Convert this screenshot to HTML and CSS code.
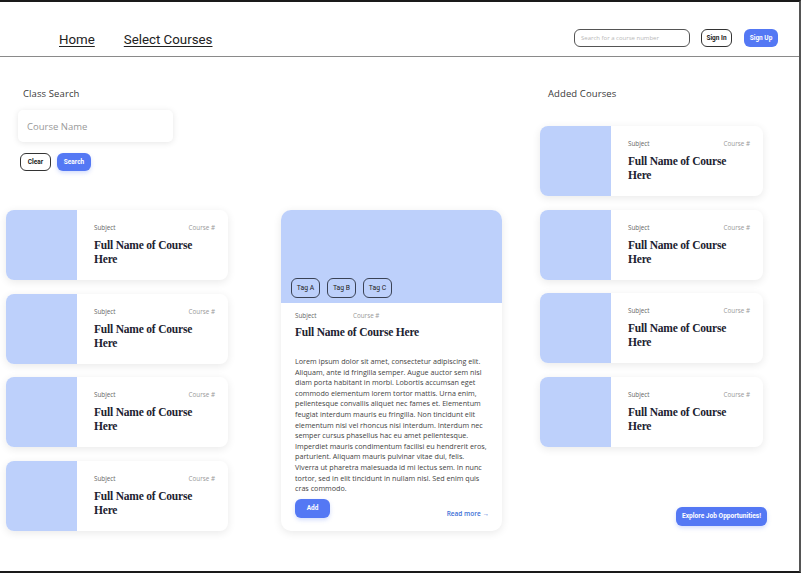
FILE: index.html
```html
<!DOCTYPE html>
<html lang="en">
<head>
<meta charset="utf-8">
<title>Select Courses</title>
<link rel="stylesheet" href="styles.css">
</head>
<body>
<div class="page">
  <header class="topbar">
    <nav class="nav">
      <a class="nav-link" href="#">Home</a>
      <a class="nav-link" href="#">Select Courses</a>
    </nav>
    <div class="actions">
      <div class="top-search">Search for a course number</div>
      <button class="btn btn-outline btn-signin">Sign In</button>
      <button class="btn btn-primary btn-signup">Sign Up</button>
    </div>
  </header>

  <main class="main">
    <section class="col col-left">
      <h2 class="section-title">Class Search</h2>
      <div class="search-box">Course Name</div>
      <div class="search-actions">
        <button class="btn btn-outline btn-clear">Clear</button>
        <button class="btn btn-primary btn-search">Search</button>
      </div>
      <div class="card-list card-list-left">
        <div class="course-card">
          <div class="thumb"></div>
          <div class="info">
            <div class="meta"><span>Subject</span><span class="num">Course #</span></div>
            <div class="title">Full Name of Course Here</div>
          </div>
        </div>
        <div class="course-card">
          <div class="thumb"></div>
          <div class="info">
            <div class="meta"><span>Subject</span><span class="num">Course #</span></div>
            <div class="title">Full Name of Course Here</div>
          </div>
        </div>
        <div class="course-card">
          <div class="thumb"></div>
          <div class="info">
            <div class="meta"><span>Subject</span><span class="num">Course #</span></div>
            <div class="title">Full Name of Course Here</div>
          </div>
        </div>
        <div class="course-card">
          <div class="thumb"></div>
          <div class="info">
            <div class="meta"><span>Subject</span><span class="num">Course #</span></div>
            <div class="title">Full Name of Course Here</div>
          </div>
        </div>
      </div>
    </section>

    <section class="col col-mid">
      <article class="detail-card">
        <div class="detail-thumb">
          <span class="tag">Tag A</span>
          <span class="tag">Tag B</span>
          <span class="tag">Tag C</span>
        </div>
        <div class="detail-body">
          <div class="detail-meta"><span class="subject">Subject</span><span class="num">Course #</span></div>
          <h3 class="detail-title">Full Name of Course Here</h3>
          <p class="detail-text">Lorem ipsum dolor sit amet, consectetur adipiscing elit. Aliquam, ante id fringilla semper. Augue auctor sem nisl diam porta habitant in morbi. Lobortis accumsan eget commodo elementum lorem tortor mattis. Urna enim, pellentesque convallis aliquet nec fames et. Elementum feugiat interdum mauris eu fringilla. Non tincidunt elit elementum nisi vel rhoncus nisi interdum. Interdum nec semper cursus phasellus hac eu amet pellentesque. Imperdiet mauris condimentum facilisi eu hendrerit eros, parturient. Aliquam mauris pulvinar vitae dui, felis. Viverra ut pharetra malesuada id mi lectus sem. In nunc tortor, sed in elit tincidunt in nullam nisl. Sed enim quis cras commodo.</p>
          <div class="detail-footer">
            <button class="btn btn-primary btn-add">Add</button>
            <a class="read-more" href="#">Read more →</a>
          </div>
        </div>
      </article>
    </section>

    <section class="col col-right">
      <h2 class="section-title section-title-right">Added Courses</h2>
      <div class="card-list card-list-right">
        <div class="course-card">
          <div class="thumb"></div>
          <div class="info">
            <div class="meta"><span>Subject</span><span class="num">Course #</span></div>
            <div class="title">Full Name of Course Here</div>
          </div>
        </div>
        <div class="course-card">
          <div class="thumb"></div>
          <div class="info">
            <div class="meta"><span>Subject</span><span class="num">Course #</span></div>
            <div class="title">Full Name of Course Here</div>
          </div>
        </div>
        <div class="course-card">
          <div class="thumb"></div>
          <div class="info">
            <div class="meta"><span>Subject</span><span class="num">Course #</span></div>
            <div class="title">Full Name of Course Here</div>
          </div>
        </div>
        <div class="course-card">
          <div class="thumb"></div>
          <div class="info">
            <div class="meta"><span>Subject</span><span class="num">Course #</span></div>
            <div class="title">Full Name of Course Here</div>
          </div>
        </div>
      </div>
      <button class="btn btn-primary btn-explore">Explore Job Opportunities!</button>
    </section>
  </main>
</div>
</body>
</html>
```

FILE: styles.css
```css
* {
  box-sizing: border-box;
  margin: 0;
  padding: 0;
}

body {
  margin: 0;
  background: #fff;
  font-family: "Open Sans", "Noto Sans", sans-serif;
  color: #222;
}

.page {
  width: 801px;
  height: 573px;
  border-top: 2px solid #1a1a1a;
  border-right: 2px solid #555;
  border-bottom: 2px solid #1a1a1a;
  overflow: hidden;
  background: #fff;
}

/* ---------- top bar ---------- */
.topbar {
  height: 55px;
  border-bottom: 1px solid #8a8a8a;
  display: flex;
  align-items: center;
  justify-content: space-between;
  padding: 18px 21px 0 59px;
}

.nav {
  display: flex;
  gap: 29px;
  padding-top: 3px;
}

.nav-link {
  font-family: Roboto, "Liberation Sans", sans-serif;
  font-size: 13.3px;
  color: #222;
  text-decoration: underline;
  text-decoration-thickness: 1px;
  text-underline-offset: 2px;
}

.actions {
  display: flex;
  align-items: center;
  gap: 11px;
}

.top-search {
  width: 116px;
  height: 18px;
  border: 1px solid #555;
  border-radius: 6px;
  display: flex;
  align-items: center;
  padding-left: 6px;
  font-size: 6px;
  color: #b8b8b8;
}

.btn {
  font-family: Roboto, "Liberation Sans", sans-serif;
  font-weight: 700;
  font-size: 6.5px;
  height: 18px;
  border-radius: 6px;
  display: inline-flex;
  align-items: center;
  justify-content: center;
  cursor: pointer;
}

.btn-outline {
  background: #fff;
  border: 1px solid #333;
  color: #222;
}

.btn-primary {
  background: #5478f4;
  border: none;
  color: #fff;
}

.btn-signin { width: 31px; }
.btn-signup { width: 34px; margin-left: 1px; }

/* ---------- main ---------- */
.main {
  display: flex;
  padding-left: 6px;
}

.col-left {
  width: 222px;
  padding-top: 31px;
}

.col-mid {
  width: 221px;
  margin-left: 53px;
  padding-top: 153px;
}

.col-right {
  width: 223px;
  margin-left: 38px;
  padding-top: 31px;
  display: flex;
  flex-direction: column;
}

.section-title {
  font-size: 9.5px;
  font-weight: 500;
  line-height: 12px;
  color: #3a3a3a;
  padding-left: 17px;
  letter-spacing: 0.1px;
}

.section-title-right {
  padding-left: 8px;
}

.search-box {
  margin: 10px 0 0 12px;
  width: 155px;
  height: 32px;
  border-radius: 5px;
  background: #fff;
  box-shadow: 0 1px 6px rgba(0, 0, 0, 0.1);
  display: flex;
  align-items: center;
  padding-left: 9px;
  font-size: 9.5px;
  color: #999;
}

.search-actions {
  margin: 11px 0 0 14px;
  display: flex;
  gap: 6px;
}

.btn-clear { width: 31px; }
.btn-search {
  width: 34px;
  box-shadow: 0 2px 4px rgba(84, 120, 244, 0.25);
}

.card-list {
  display: flex;
  flex-direction: column;
  gap: 13.5px;
}

.card-list-left { margin-top: 39px; }
.card-list-right { margin-top: 26px; }

.course-card {
  display: flex;
  height: 70px;
  border-radius: 8px;
  background: #fff;
  box-shadow: 0 2px 8px rgba(0, 0, 0, 0.09);
  overflow: hidden;
}

.thumb {
  width: 71px;
  flex: none;
  background: #bdd0fb;
}

.info {
  flex: 1;
  padding: 14px 13px 0 17px;
}

.meta {
  display: flex;
  justify-content: space-between;
  font-size: 6.3px;
  line-height: 8px;
  color: #666;
}

.num { color: #999; }

.title {
  margin-top: 6px;
  font-family: "Liberation Serif", serif;
  font-weight: 700;
  font-size: 11.5px;
  line-height: 14px;
  letter-spacing: -0.2px;
  color: #1c2230;
}

/* ---------- detail card ---------- */
.detail-card {
  height: 321px;
  border-radius: 10px;
  background: #fff;
  box-shadow: 0 2px 8px rgba(0, 0, 0, 0.09);
  overflow: hidden;
  display: flex;
  flex-direction: column;
}

.detail-thumb {
  height: 93px;
  flex: none;
  background: #bdd0fb;
  display: flex;
  align-items: flex-end;
  gap: 7px;
  padding: 0 0 5px 10px;
}

.tag {
  width: 29px;
  height: 20px;
  border: 1px solid #3a4255;
  border-radius: 6px;
  display: flex;
  align-items: center;
  justify-content: center;
  font-family: Roboto, "Liberation Sans", sans-serif;
  font-size: 6.8px;
  color: #222;
}

.detail-body {
  padding: 9px 13px 0 14px;
}

.detail-meta {
  display: flex;
  font-size: 6.3px;
  line-height: 8px;
  color: #666;
}

.detail-meta .subject { width: 58px; }

.detail-title {
  margin-top: 5px;
  font-family: "Liberation Serif", serif;
  font-weight: 700;
  font-size: 11.5px;
  line-height: 14px;
  letter-spacing: -0.2px;
  color: #1c2230;
}

.detail-text {
  margin-top: 17px;
  font-size: 7.2px;
  line-height: 10.6px;
  color: #444;
}

.detail-footer {
  margin-top: 5px;
  display: flex;
  justify-content: space-between;
  align-items: flex-end;
}

.btn-add {
  width: 35px;
  height: 19px;
  box-shadow: 0 2px 4px rgba(84, 120, 244, 0.25);
}

.read-more {
  font-size: 6.5px;
  line-height: 8px;
  font-weight: 600;
  color: #3d6fd6;
  text-decoration: none;
}

.btn-explore {
  align-self: flex-end;
  margin-right: -4px;
  margin-top: 60px;
  width: 91px;
  height: 19px;
  font-size: 6.6px;
  box-shadow: 0 2px 4px rgba(84, 120, 244, 0.25);
}
```
